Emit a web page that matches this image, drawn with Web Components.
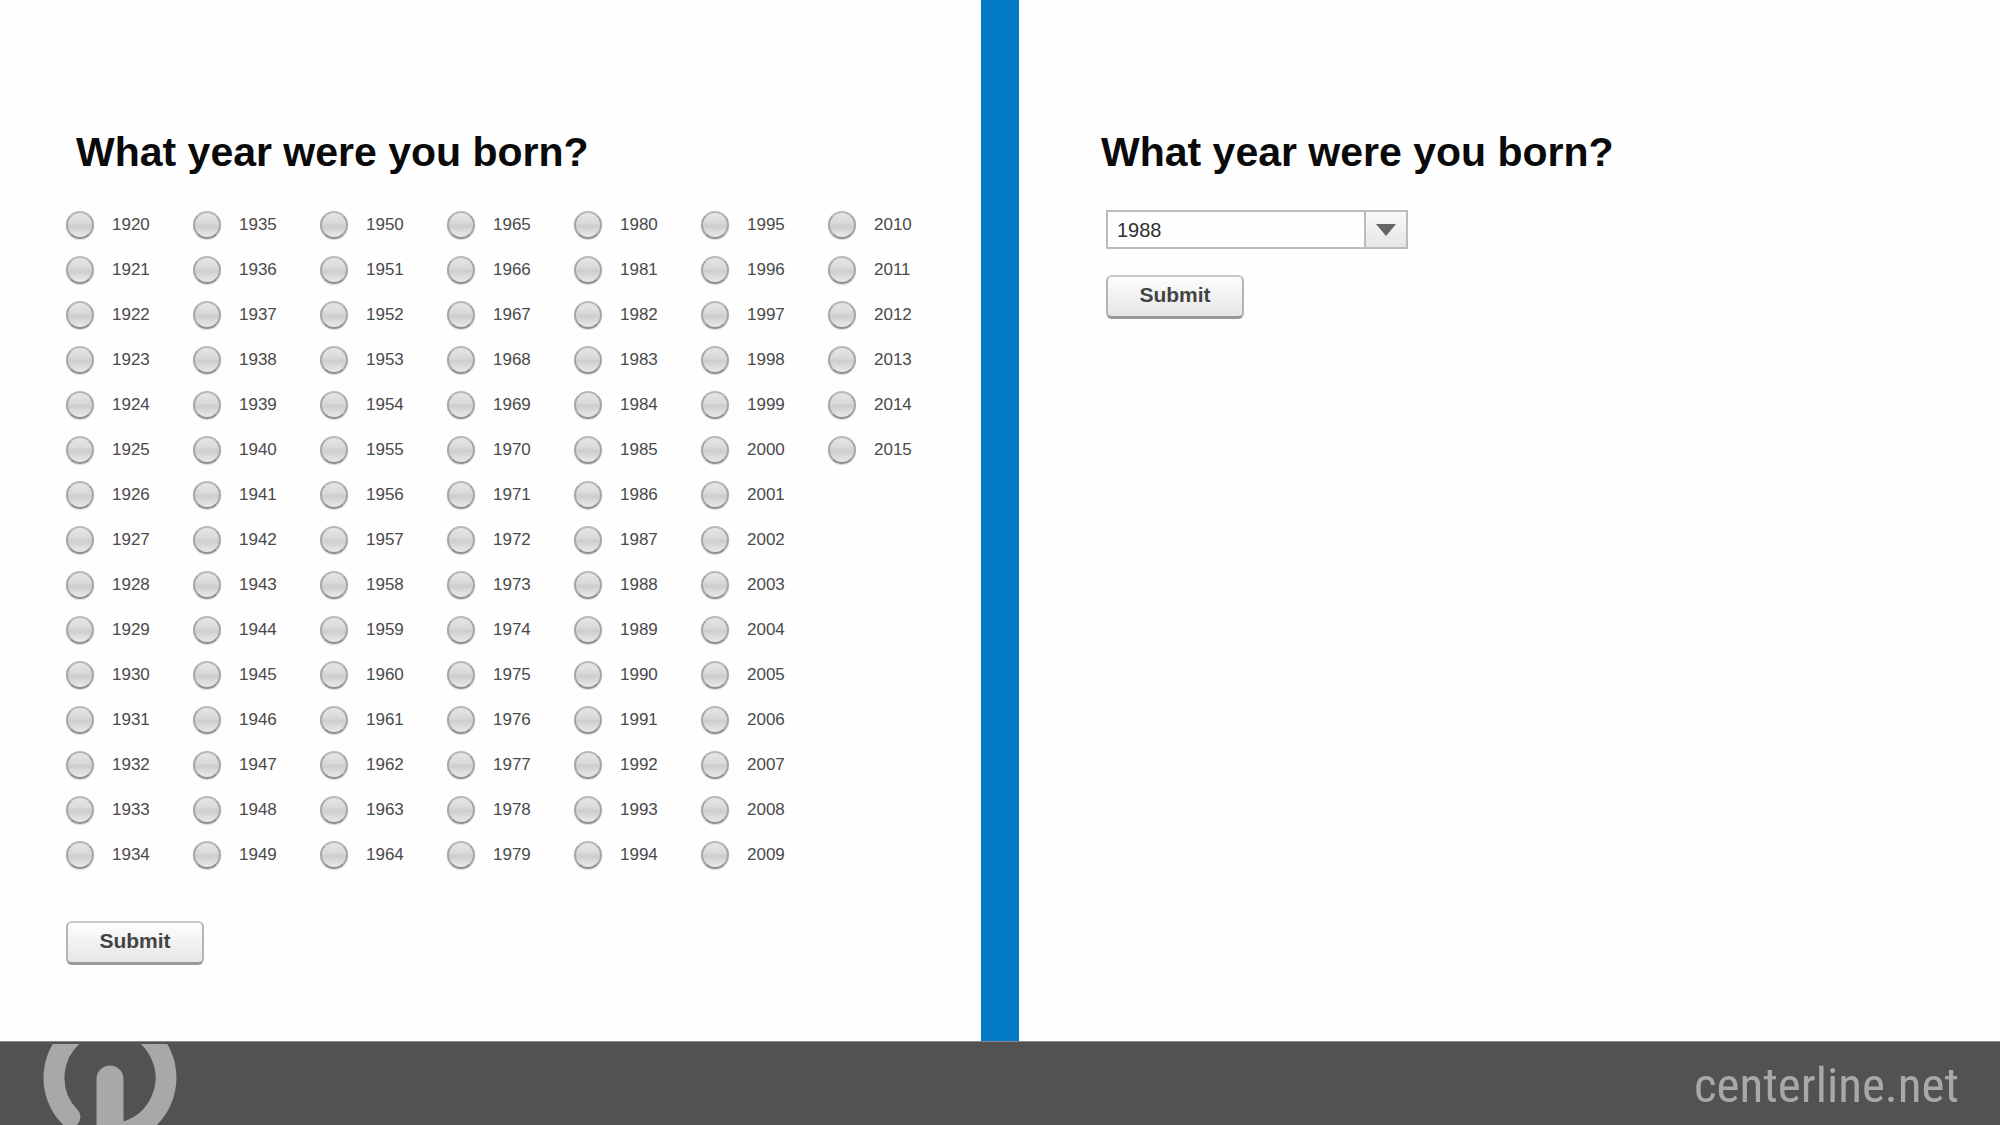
<!DOCTYPE html>
<html lang="en">
<head>
<meta charset="utf-8">
<title>What year were you born?</title>
<style>
  body { margin: 0; background: #fefefe; font-family: "Liberation Sans", Arial, sans-serif; }
</style>
</head>
<body>
<comparison-page>
  <question-panel slot="before" class="radios">
    <span slot="title">What year were you born?</span>
    <year-radios from="1920" to="2015"></year-radios>
    <submit-button>Submit</submit-button>
  </question-panel>
  <question-panel slot="after" class="dropdown">
    <span slot="title">What year were you born?</span>
    <year-select from="1920" to="2015" value="1988"></year-select>
    <submit-button>Submit</submit-button>
  </question-panel>
  <brand-footer slot="footer">centerline.net</brand-footer>
</comparison-page>

<script>
class Base extends HTMLElement {
  connectedCallback() {
    if (this.shadowRoot) return;
    this.attachShadow({ mode: "open" }).innerHTML = this.render();
  }
  get years() {
    const from = Number(this.getAttribute("from"));
    const to = Number(this.getAttribute("to"));
    return Array.from({ length: to - from + 1 }, (_, i) => from + i);
  }
}

customElements.define("comparison-page", class extends Base {
  render() {
    return `
      <style>
        :host { display: flex; flex-direction: column; min-height: 100vh; }
        main { flex: 1; display: grid; grid-template-columns: 1fr 38px 1fr; }
        .divider { background: #007ac2; }
      </style>
      <main>
        <slot name="before"></slot>
        <div class="divider"></div>
        <slot name="after"></slot>
      </main>
      <slot name="footer"></slot>`;
  }
});

customElements.define("question-panel", class extends Base {
  render() {
    return `
      <style>
        :host { display: block; box-sizing: border-box; padding-top: 128px; }
        :host(.radios) { padding-left: 66px; --title-indent: 10px; --form-indent: 0; --title-gap: 26px; --gap: 44px; }
        :host(.dropdown) { padding-left: 82px; --title-indent: 0; --form-indent: 5px; --title-gap: 34px; --gap: 26px; }
        h1 { margin: 0; padding-left: var(--title-indent); font-size: 41px; line-height: 48px; font-weight: 700; color: #0a0a0a; white-space: nowrap; }
        form { margin: var(--title-gap) 0 0; padding-left: var(--form-indent); display: flex; flex-direction: column; align-items: flex-start; gap: var(--gap); }
      </style>
      <h1><slot name="title"></slot></h1>
      <form><slot></slot></form>`;
  }
});

customElements.define("year-radios", class extends Base {
  render() {
    return `
      <style>
        :host { display: block; }
        fieldset { margin: 0; padding: 0; border: 0; min-width: 0; display: grid; grid-auto-flow: column; grid-template-rows: repeat(15, 45px); grid-auto-columns: 127px; }
        label { display: flex; align-items: center; gap: 18px; font-size: 17px; line-height: 20px; color: #4a4a4a; }
        input {
          appearance: none; box-sizing: border-box; flex: none; margin: 0; width: 28px; height: 28px;
          border: 2px solid #a6a6a6; border-top-color: #b9b9b9; border-bottom-color: #8f8f8f; border-radius: 50%;
          background: linear-gradient(#e6e6e6 0%, #dadada 40%, #cdcdcd 54%, #dedede 80%, #e8e8e8 100%);
          box-shadow: 0 1px 1px #d8d8d8;
        }
        input:checked { background: radial-gradient(circle, #444 0 5px, #dadada 6px); }
      </style>
      <fieldset aria-label="Year of birth">
        ${this.years.map(y => `<label><input type="radio" name="year" value="${y}">${y}</label>`).join("")}
      </fieldset>`;
  }
});

customElements.define("year-select", class extends Base {
  render() {
    const value = Number(this.getAttribute("value"));
    return `
      <style>
        :host { display: grid; grid-template-columns: 258px 44px; height: 39px; }
        select {
          grid-area: 1 / 1 / 2 / 3; appearance: none; box-sizing: border-box; margin: 0; padding: 0 50px 0 9px;
          border: 2px solid #bcbcbc; border-radius: 0; background: #fefefe; color: #303030;
          font: 20px/24px "Liberation Sans", Arial, sans-serif;
        }
        .arrow {
          grid-area: 1 / 2; z-index: 1; pointer-events: none; display: flex; align-items: center; justify-content: center;
          margin: 2px 2px 2px 0; border-left: 2px solid #bcbcbc; background: linear-gradient(#f8f8f8, #e6e6e6);
        }
      </style>
      <select aria-label="Year of birth">
        ${this.years.map(y => `<option${y === value ? " selected" : ""}>${y}</option>`).join("")}
      </select>
      <span class="arrow"><svg width="20" height="12" viewBox="0 0 20 12" aria-hidden="true"><path d="M0 0H20L10 12Z" fill="#656565"/></svg></span>`;
  }
});

customElements.define("submit-button", class extends Base {
  render() {
    return `
      <style>
        :host { display: block; }
        button {
          display: block; box-sizing: border-box; width: 138px; height: 44px; margin: 0; padding: 0 0 4px;
          border: 2px solid #b4b4b4; border-top-color: #c8c8c8; border-bottom: 3px solid #989898; border-radius: 6px;
          background: linear-gradient(#fdfdfd, #e6e6e6); color: #444;
          font: 700 21px/24px "Liberation Sans", Arial, sans-serif;
        }
      </style>
      <button type="button"><slot></slot></button>`;
  }
});

customElements.define("brand-footer", class extends Base {
  render() {
    return `
      <style>
        :host { display: block; }
        footer {
          box-sizing: border-box; height: 84px; padding: 0 41px 0 43px; border-top: 1px solid #8a8a8a; background: #525252;
          display: flex; align-items: center; justify-content: space-between;
        }
        svg { display: block; align-self: flex-end; }
        a { padding-top: 4px; color: #a8a8a8; text-decoration: none; font: 400 49px/60px "Roboto Condensed", "Liberation Sans Narrow", "Liberation Sans", sans-serif; }
      </style>
      <footer>
        <svg width="134" height="81" viewBox="43 1044 134 81" role="img" aria-label="Centerline logo">
          <g fill="none" stroke="#a8a8a8" stroke-linecap="round">
            <path stroke-width="21" d="M70 1117A56 56 0 1 1 124 1132"/>
            <path stroke-width="27" d="M110 1079V1145"/>
          </g>
        </svg>
        <a href="#"><slot></slot></a>
      </footer>`;
  }
});
</script>
</body>
</html>
